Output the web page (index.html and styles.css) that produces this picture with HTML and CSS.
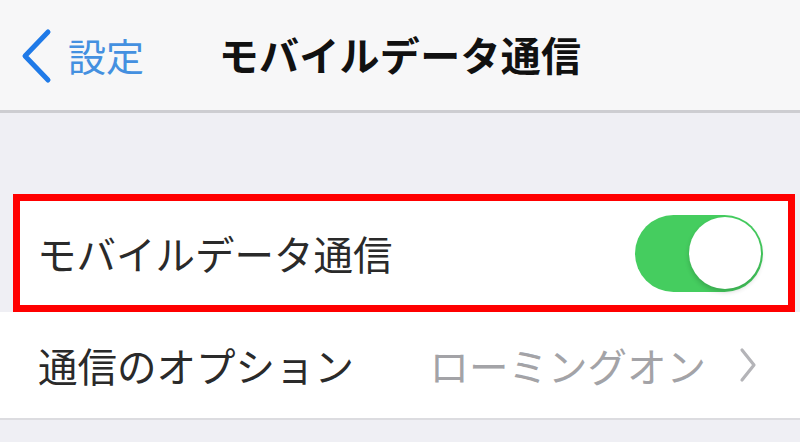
FILE: index.html
```html
<!DOCTYPE html>
<html lang="ja">
<head>
<meta charset="utf-8">
<link rel="stylesheet" href="styles.css">
</head>
<body>
<div class="screen">
  <header class="nav">
    <div class="back">
      <svg class="back-chev" width="34" height="56" viewBox="0 0 34 56">
        <path d="M30 4 L7 28 L30 52" fill="none" stroke="#1f7ae8" stroke-width="5" stroke-linecap="round" stroke-linejoin="round"/>
      </svg>
      <span class="back-label">設定</span>
    </div>
    <div class="nav-title">モバイルデータ通信</div>
    <div class="nav-spacer"></div>
  </header>
  <div class="section-gap"></div>
  <div class="highlight">
    <div class="row row-toggle">
      <span class="label">モバイルデータ通信</span>
      <div class="switch"><div class="knob"></div></div>
    </div>
  </div>
  <div class="row row-option">
    <span class="label">通信のオプション</span>
    <span class="detail">ローミングオン</span>
    <svg class="chev" width="20" height="36" viewBox="0 0 20 36">
      <path d="M4 3 L16 18 L4 33" fill="none" stroke="#b4b4b8" stroke-width="3.2" stroke-linecap="round" stroke-linejoin="round"/>
    </svg>
  </div>
  <div class="bottom-gap"></div>
</div>
</body>
</html>
```

FILE: styles.css
```css
html, body {
  margin: 0;
  padding: 0;
}
body {
  width: 800px;
  height: 442px;
  overflow: hidden;
  background: #efeff4;
  font-family: "Noto Sans CJK JP", "Noto Sans", sans-serif;
}
.screen {
  display: flex;
  flex-direction: column;
  height: 442px;
}
.nav {
  height: 108px;
  background: #f7f7f8;
  border-bottom: 3px solid #cdcdd1;
  display: grid;
  grid-template-columns: 1fr auto 1fr;
  align-items: center;
  padding-top: 2px;
  box-sizing: content-box;
}
.back {
  display: flex;
  align-items: center;
  padding-left: 18px;
  gap: 16px;
}
.back-chev {
  display: block;
}
.back-label {
  font-size: 38px;
  color: #4490e0;
  line-height: 1;
  padding-bottom: 2px;
}
.nav-title {
  font-size: 40px;
  font-weight: bold;
  color: #111;
  line-height: 1;
  letter-spacing: 0.3px;
  padding-bottom: 4px;
}
.section-gap {
  height: 81px;
  background: #efeff4;
}
.highlight {
  border: 7px solid #ff0000;
  margin: 0 5px 0 13px;
  background: #fff;
}
.row {
  display: flex;
  align-items: center;
  background: #fff;
}
.row-toggle {
  height: 104px;
  padding: 0 25px 0 17px;
  justify-content: space-between;
}
.label {
  font-size: 39.5px;
  color: #2a2a2a;
  line-height: 1;
}
.switch {
  width: 128px;
  height: 77px;
  border-radius: 39px;
  background: #45cd5f;
  display: flex;
  justify-content: flex-end;
  align-items: center;
  padding: 0 2px;
  box-sizing: border-box;
}
.knob {
  width: 72px;
  height: 72px;
  border-radius: 50%;
  background: #fff;
  box-shadow: 0 3px 5px rgba(0, 0, 0, 0.18);
}
.row-option {
  height: 106px;
  padding: 0 38px;
  border-bottom: 2px solid #dcdce0;
}
.row-option .label {
  flex: 1;
}
.detail {
  font-size: 39.5px;
  color: #a3a3a7;
  line-height: 1;
  margin-right: 32px;
}
.chev {
  display: block;
  margin-right: 4px;
}
.bottom-gap {
  flex: 1;
  background: #efeff4;
}
```
